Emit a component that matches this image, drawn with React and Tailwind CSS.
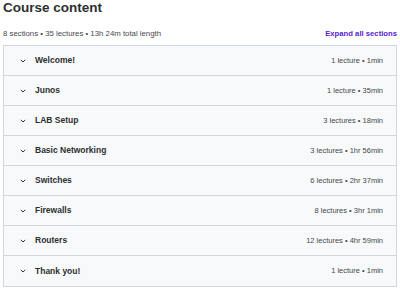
import React from "react";

const sections = [
  { title: "Welcome!", meta: "1 lecture • 1min" },
  { title: "Junos", meta: "1 lecture • 35min" },
  { title: "LAB Setup", meta: "3 lectures • 18min" },
  { title: "Basic Networking", meta: "3 lectures • 1hr 56min" },
  { title: "Switches", meta: "6 lectures • 2hr 37min" },
  { title: "Firewalls", meta: "8 lectures • 3hr 1min" },
  { title: "Routers", meta: "12 lectures • 4hr 59min" },
  { title: "Thank you!", meta: "1 lecture • 1min" },
];

function Chevron() {
  return (
    <svg width="6" height="4" viewBox="0 0 6 4" className="shrink-0">
      <path d="M0.8 0.9 L3 3 L5.2 0.9" fill="none" stroke="#2d2f31" strokeWidth="1" />
    </svg>
  );
}

export default function App() {
  return (
    <div className="w-[400px] h-[289px] overflow-hidden bg-white text-[#2d2f31] font-['Liberation_Sans',Arial,sans-serif]">
      <div className="pl-[3px] pr-[3px]">
        <h2 className="text-[13.5px] font-bold leading-[16px]">Course content</h2>
        <div className="mt-[13px] flex items-baseline justify-between leading-[10px]">
          <span className="text-[7.8px] text-[#45494c]">8 sections • 35 lectures • 13h 24m total length</span>
          <button className="text-[7.7px] font-bold text-[#5624d0]">Expand all sections</button>
        </div>
        <div className="mt-[6px] border border-[#d1d7dc] bg-[#f7f9fa]">
          {sections.map((s, i) => (
            <div
              key={s.title}
              className={
                "flex h-[30px] items-center justify-between pl-[16px] pr-[13px] " +
                (i < sections.length - 1 ? "border-b border-[#d1d7dc]" : "")
              }
            >
              <div className="flex items-center gap-[9px]">
                <Chevron />
                <span className="text-[8.5px] font-bold">{s.title}</span>
              </div>
              <span className="text-[7.5px] text-[#45494c]">{s.meta}</span>
            </div>
          ))}
        </div>
      </div>
    </div>
  );
}
